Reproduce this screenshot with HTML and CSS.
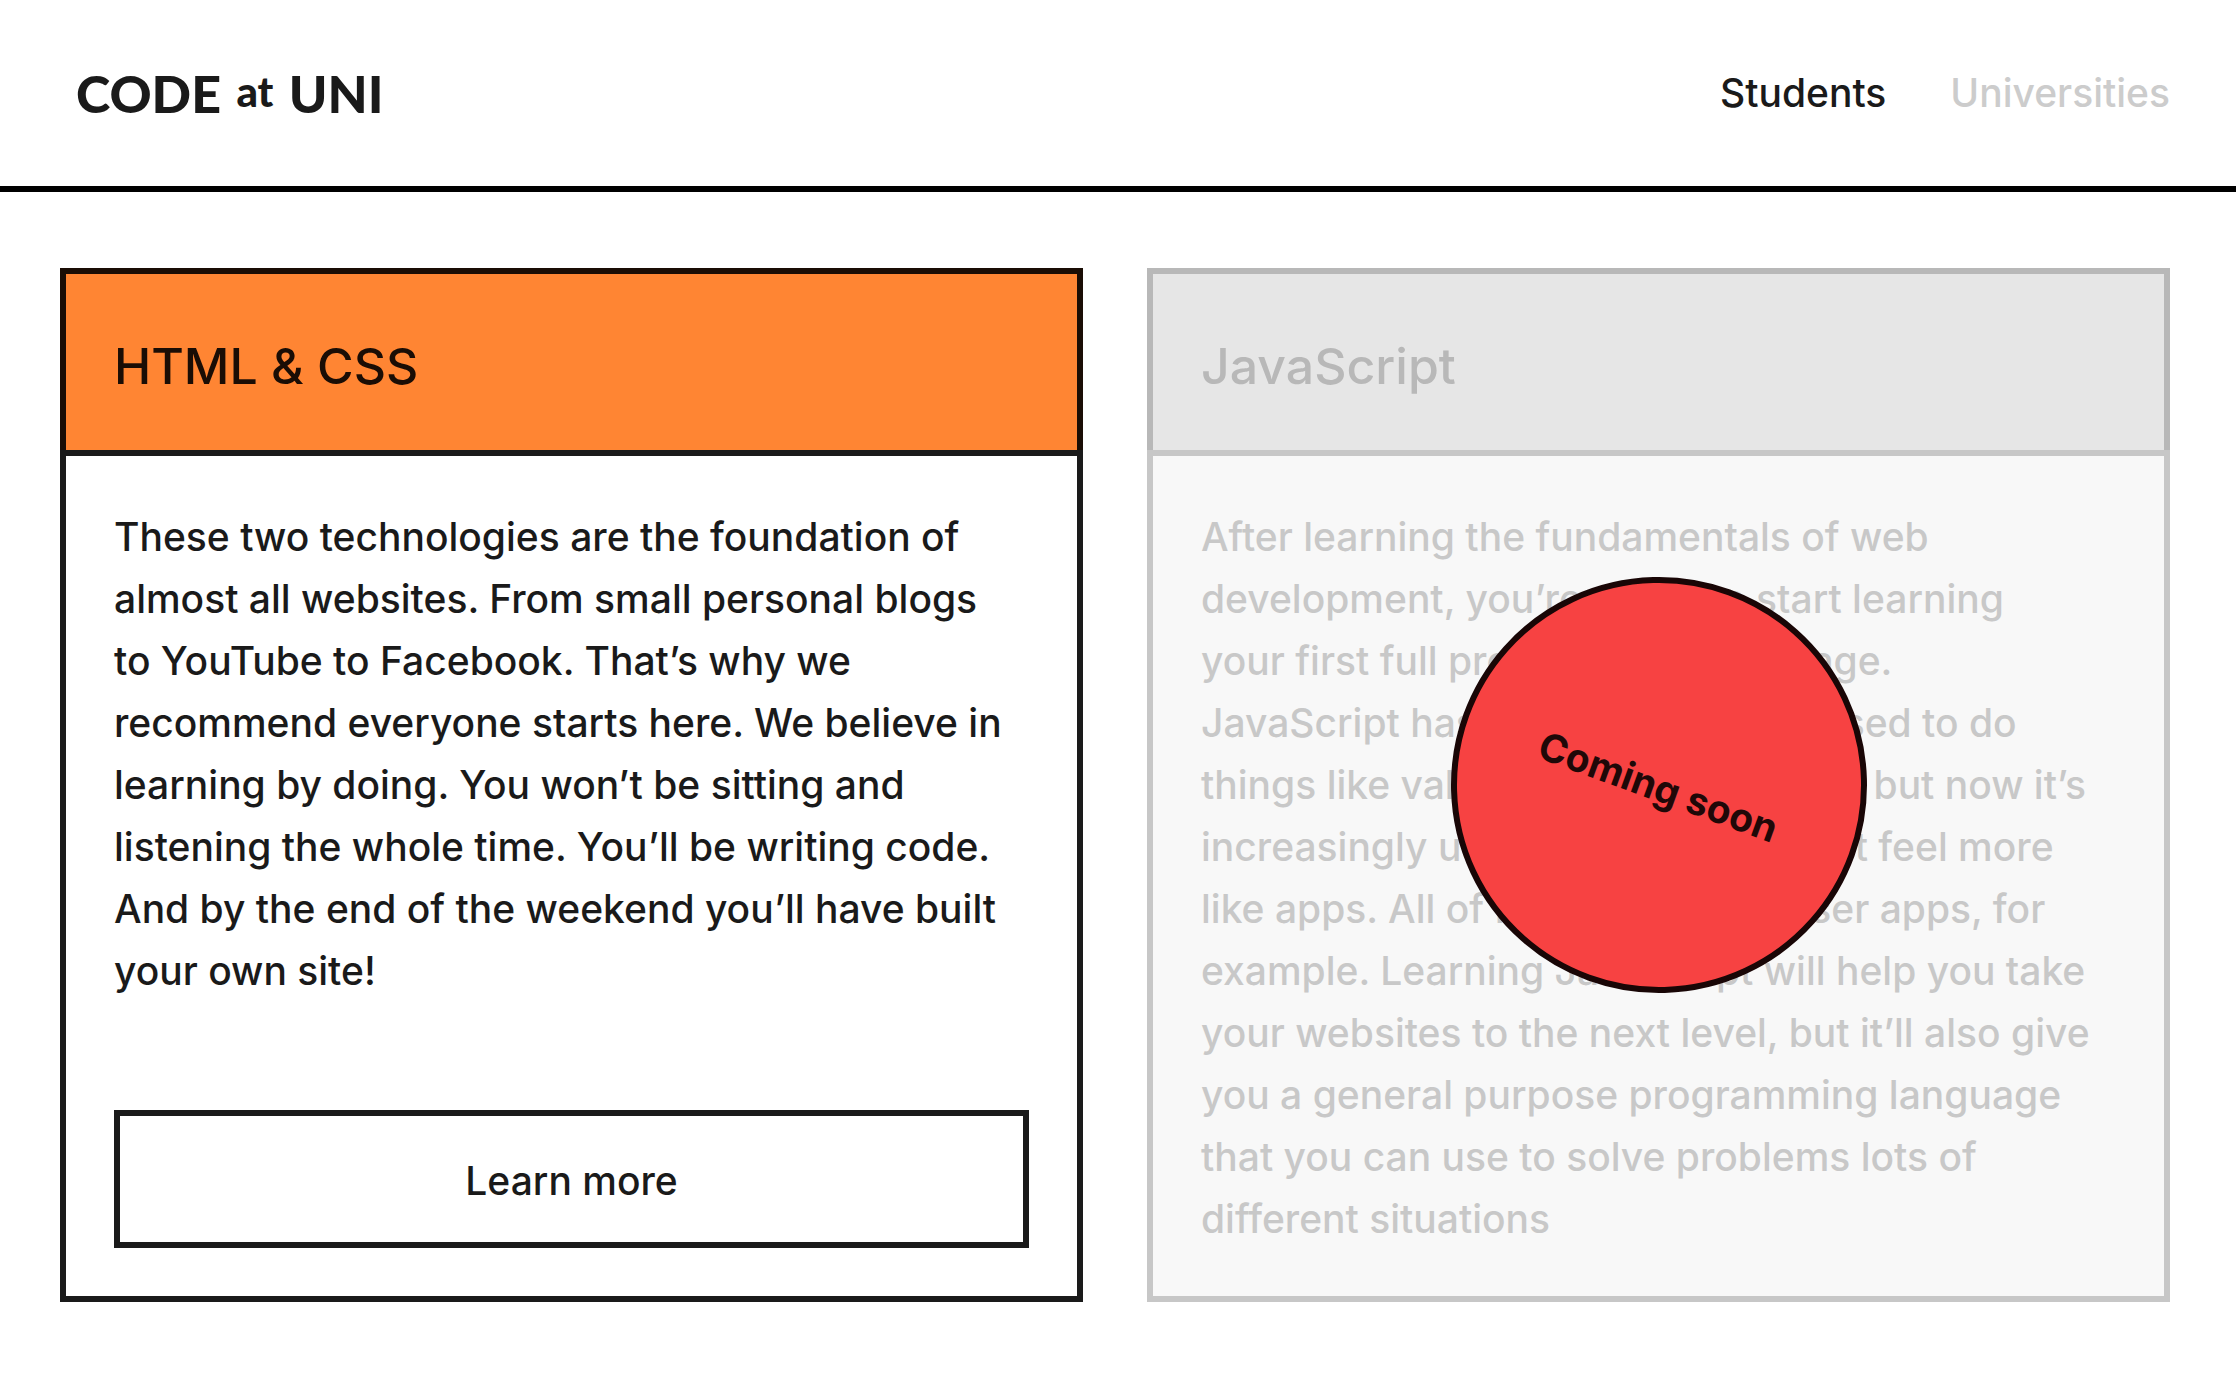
FILE: index.html
```html
<!DOCTYPE html>
<html lang="en">
<head>
<meta charset="utf-8">
<title>CODE at UNI</title>
<link rel="stylesheet" href="styles.css">
</head>
<body>
<header class="site-header">
  <a class="logo" href="#">CODE <span class="logo-small">at</span> UNI</a>
  <nav class="nav">
    <a class="nav-link nav-link-current" href="#">Students</a>
    <a class="nav-link" href="#">Universities</a>
  </nav>
</header>
<main class="courses">
  <article class="card">
    <h2 class="card-title">HTML &amp; CSS</h2>
    <div class="card-body">
      <p class="card-text">These two technologies are the foundation of<br>
        almost all websites. From small personal blogs<br>
        to YouTube to Facebook. That’s why we<br>
        recommend everyone starts here. We believe in<br>
        learning by doing. You won’t be sitting and<br>
        listening the whole time. You’ll be writing code.<br>
        And by the end of the weekend you’ll have built<br>
        your own site!</p>
      <button class="button" type="button">Learn more</button>
    </div>
  </article>
  <article class="card card-disabled">
    <h2 class="card-title">JavaScript</h2>
    <div class="card-body">
      <p class="card-text">After learning the fundamentals of web<br>
        development, you’re ready to start learning<br>
        your first full programming language.<br>
        JavaScript has traditionally been used to do<br>
        things like validating contact forms, but now it’s<br>
        increasingly used to make sites that feel more<br>
        like apps. All of Facebook’s browser apps, for<br>
        example. Learning JavaScript will help you take<br>
        your websites to the next level, but it’ll also give<br>
        you a general purpose programming language<br>
        that you can use to solve problems lots of<br>
        different situations</p>
    </div>
    <div class="badge"><span class="badge-text">Coming soon</span></div>
  </article>
</main>
</body>
</html>
```
FILE: styles.css
```css
* {
  box-sizing: border-box;
}

body {
  margin: 0;
  background: #fff;
  color: #1a1a1a;
  font-family: Inter, sans-serif;
  font-size: 39px;
  font-weight: 500;
  line-height: 62px;
}

a {
  color: inherit;
  text-decoration: none;
}

.site-header {
  display: flex;
  align-items: center;
  justify-content: space-between;
  padding: 62px 66px 62px 76px;
  border-bottom: 6px solid #000;
}

.logo {
  font-family: Lato, sans-serif;
  font-size: 52px;
  font-weight: 900;
}

.logo-small {
  margin: 0 3px;
  font-size: 42px;
  line-height: 1;
  vertical-align: 6px;
}

.nav {
  display: flex;
  gap: 64px;
}

.nav-link {
  color: #ccc;
}

.nav-link-current {
  color: #1a1a1a;
}

.courses {
  display: grid;
  grid-template-columns: 1fr 1fr;
  gap: 64px;
  padding: 76px 66px 74px 60px;
}

.card {
  position: relative;
  display: flex;
  flex-direction: column;
}

.card-title {
  margin: 0;
  padding: 52px 48px 44px;
  border: 6px solid #1a0d05;
  border-bottom: 0;
  background: #ff8533;
  color: #1a0d05;
  font-size: 50px;
  font-weight: 500;
  line-height: 80px;
}

.card-body {
  display: flex;
  flex: 1;
  flex-direction: column;
  justify-content: space-between;
  padding: 48px;
  border: 6px solid #1a1a1a;
}

.card-text {
  margin: 0 0 -2px;
  padding-top: 2px;
  white-space: nowrap;
}

.button {
  padding: 34px 32px 30px;
  border: 6px solid #1a1a1a;
  background: #fff;
  color: inherit;
  font: inherit;
}

.card-disabled .card-title {
  border-color: #b8b8b8;
  background: #e6e6e6;
  color: #b8b8b8;
}

.card-disabled .card-body {
  border-color: #c7c7c7;
  background: #f8f8f8;
  color: #c8c8c8;
}

.badge {
  position: absolute;
  top: 50%;
  left: 50%;
  display: flex;
  align-items: center;
  justify-content: center;
  width: 416px;
  height: 416px;
  border: 6px solid #190606;
  border-radius: 50%;
  background: #f74242;
  color: #1f0808;
  transform: translate(-50%, -50%) rotate(20deg);
}

.badge-text {
  padding-top: 4px;
  font-weight: 700;
}
```
